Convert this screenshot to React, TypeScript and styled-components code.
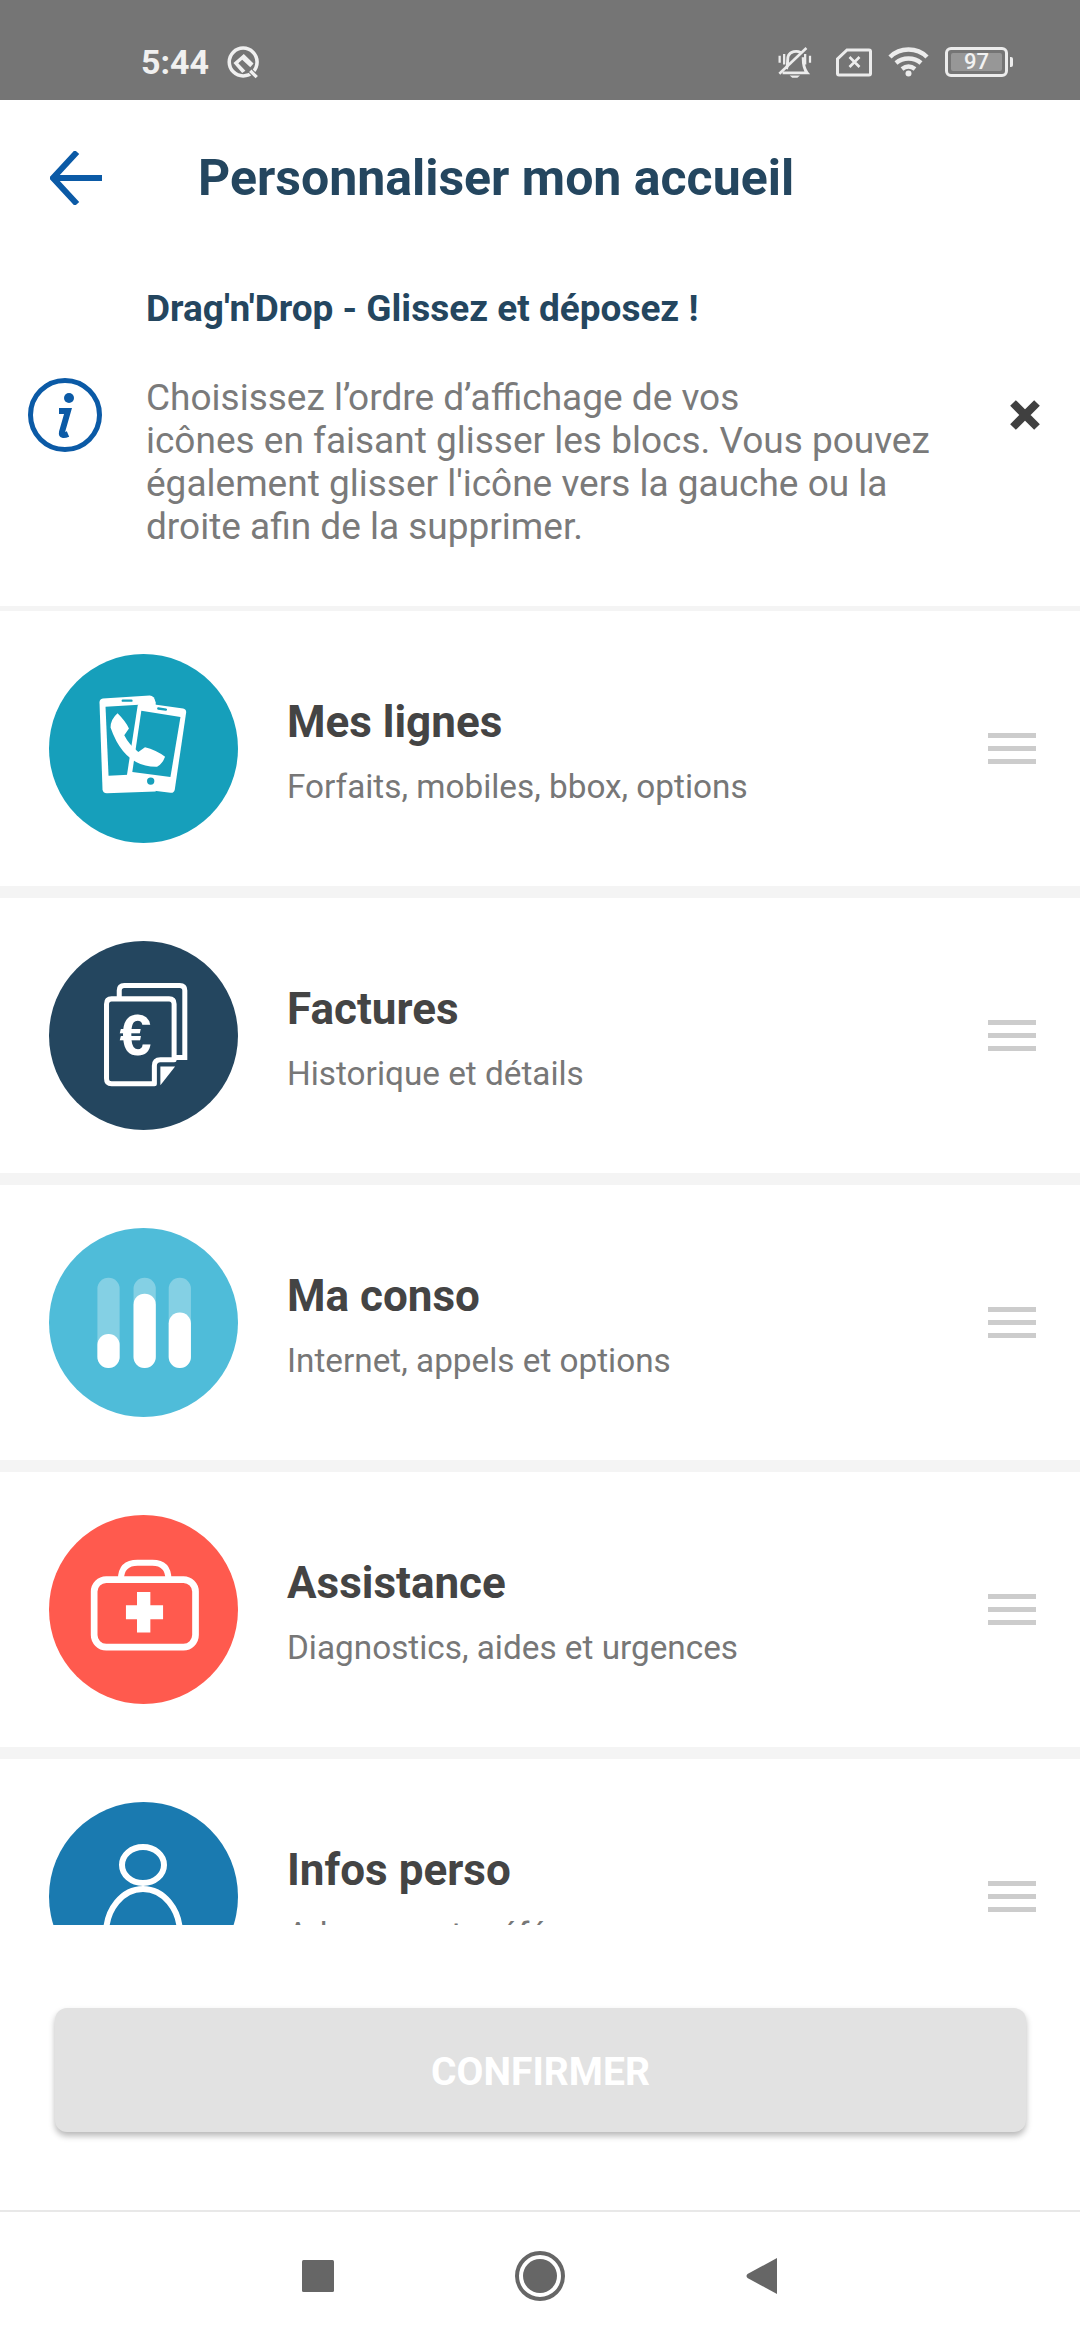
import React from "react";
import styled, { createGlobalStyle } from "styled-components";

const GlobalStyle = createGlobalStyle`
  html, body {
    margin: 0;
    padding: 0;
    background: #ffffff;
  }
  * {
    box-sizing: border-box;
  }
`;

const BLUE = "#0b5aa6";
const NAVY = "#24465f";

function QLogo() {
  return (
    <svg width="34" height="36" viewBox="345 70 105 110">
      <circle cx="398" cy="125" r="43" fill="none" stroke="#f0f0f0" strokeWidth="11" />
      <path d="M418 150l24 24" stroke="#757575" strokeWidth="16" />
      <path d="M420 152l20 20" stroke="#f0f0f0" strokeWidth="10" />
      <path d="M400 100L430 130L420 141L395 118L383 129L405 152L395 159L368 128Z" fill="#f0f0f0" />
    </svg>
  );
}

function BellOffIcon() {
  return (
    <svg width="35" height="31" viewBox="105 78 108 96" fill="none" stroke="#ececec">
      <path d="M134 146C141 130 135 115 140 105C146 92 165 88 178 95M186 110C186 125 185 142 198 158H122" strokeWidth="9" />
      <path d="M112 161L196 81" strokeWidth="8" />
      <path d="M113 105v22M127 100v32M192 100v32M207 105v22" strokeWidth="7" />
      <path d="M144 166h32l-8 7h-16z" fill="#ececec" stroke="none" />
    </svg>
  );
}

function SimIcon() {
  return (
    <svg width="36" height="29" viewBox="0 0 36 29" fill="none" stroke="#ececec">
      <path d="M11 2h22a1.5 1.5 0 0 1 1.5 1.5v22a1.5 1.5 0 0 1-1.5 1.5H3a1.5 1.5 0 0 1-1.5-1.5V11z" strokeWidth="3" />
      <path d="M13.5 9l10 10M23.5 9l-10 10" strokeWidth="2.6" />
    </svg>
  );
}

function WifiIcon() {
  return (
    <svg width="41" height="30" viewBox="0 0 41 30" fill="none" stroke="#ececec" strokeWidth="4.5">
      <path d="M2 10C12 0 29 0 39 10" />
      <path d="M8 16c7-6 18-6 25 0" />
      <path d="M14 22c4-3 9-3 13 0" />
      <circle cx="20.5" cy="26.5" r="3" fill="#ececec" stroke="none" />
    </svg>
  );
}

const BatteryWrap = styled.div`
  display: flex;
  align-items: center;
  gap: 2px;
`;

const BatteryBody = styled.div`
  width: 63px;
  height: 30px;
  border: 3px solid #ececec;
  border-radius: 6px;
  padding: 3px;
  display: flex;
`;

const BatteryFill = styled.div`
  flex: 1;
  background: #979797;
  border-radius: 2px;
  color: #f2f2f2;
  font: 500 22px/18px Roboto, sans-serif;
  text-align: center;
`;

const BatteryTip = styled.div`
  width: 3px;
  height: 10px;
  background: #ececec;
  border-radius: 0 2px 2px 0;
`;

function PhonesIcon() {
  return (
    <svg width="189" height="189" viewBox="57 45 565 565">
      <path d="M218 178L358 169Q372 169 376 190L376 456L230 461Q218 461 217 450L208 190Q208 179 218 178Z" fill="#fff" />
      <path d="M226 203L326 197L294 406L235 409Z" fill="#169fbb" />
      <path d="M335 191L458 208Q468 210 467 220L433 450Q431 461 420 460L300 445L288 420L322 200Q325 190 335 191Z" fill="#fff" />
      <path d="M333 215L450 233L420 413L306 398Z" fill="#169fbb" />
      <path d="M262 222Q288 248 296 268L282 288Q296 316 324 338L344 324Q376 332 404 352Q396 374 380 382Q282 384 241 265Q241 240 262 222Z" fill="#fff" />
      <rect x="274" y="181" width="33" height="7" rx="3.5" fill="#169fbb" />
      <rect x="380" y="206" width="30" height="7" rx="3.5" fill="#169fbb" transform="rotate(8 395 210)" />
      <circle cx="361" cy="425" r="11" fill="#169fbb" />
    </svg>
  );
}

function BillsIcon() {
  return (
    <svg width="189" height="189" viewBox="57 37 565 565">
      <path d="M267 205V185Q267 170 282 170H448Q463 170 463 185V385H432" fill="none" stroke="#fff" strokeWidth="15" />
      <path d="M372 464H244Q229 464 229 449V225Q229 210 244 210H416Q431 210 431 225V392H390Q372 392 372 410Z" fill="#24465f" stroke="#fff" strokeWidth="15" strokeLinejoin="round" />
      <path d="M390 412H434L390 468Z" fill="#fff" />
      <text x="268" y="378" fill="#fff" fontFamily="'Liberation Sans', sans-serif" fontWeight="700" fontSize="172">€</text>
    </svg>
  );
}

function ConsoIcon() {
  const bars = [
    { x: 203, top: 360 },
    { x: 312, top: 238 },
    { x: 418, top: 295 },
  ];
  return (
    <svg width="189" height="189" viewBox="57 40 570 570">
      {bars.map((bar) => (
        <g key={bar.x}>
          <rect x={bar.x} y="190" width="67" height="272" rx="33" fill="#fff" opacity="0.3" />
          <rect x={bar.x} y={bar.top} width="67" height={462 - bar.top} rx="33" fill="#fff" />
        </g>
      ))}
    </svg>
  );
}

function CaseIcon() {
  return (
    <svg width="189" height="189" viewBox="57 45 565 565">
      <rect x="192" y="238" width="303" height="202" rx="36" fill="none" stroke="#fff" strokeWidth="20" />
      <path d="M272 238Q272 188 322 188H366Q414 188 414 238" fill="none" stroke="#fff" strokeWidth="18" />
      <path d="M320 275H360V315H398V357H360V396H320V357H287V315H320Z" fill="#fff" />
    </svg>
  );
}

function PersonIcon() {
  return (
    <svg width="189" height="189" viewBox="0 0 189 189">
      <ellipse cx="94" cy="63" rx="21" ry="18" fill="none" stroke="#fff" strokeWidth="6" />
      <ellipse cx="94" cy="132" rx="37" ry="45" fill="none" stroke="#fff" strokeWidth="6" />
    </svg>
  );
}

const items = [
  { title: "Mes lignes", sub: "Forfaits, mobiles, bbox, options", color: "#169fbb", icon: <PhonesIcon /> },
  { title: "Factures", sub: "Historique et détails", color: "#24465f", icon: <BillsIcon /> },
  { title: "Ma conso", sub: "Internet, appels et options", color: "#4fbcd9", icon: <ConsoIcon /> },
  { title: "Assistance", sub: "Diagnostics, aides et urgences", color: "#ff5a4e", icon: <CaseIcon /> },
  { title: "Infos perso", sub: "Adresses et préférences", color: "#1a7ab0", icon: <PersonIcon /> },
];

function App() {
  return (
    <StyledPage>
      <GlobalStyle />
      <StyledStatusBar>
        <StyledStatusLeft>
          <StyledTime>5:44</StyledTime>
          <QLogo />
        </StyledStatusLeft>
        <StyledStatusRight>
          <BellOffIcon />
          <SimIcon />
          <WifiIcon />
          <BatteryWrap>
            <BatteryBody>
              <BatteryFill>97</BatteryFill>
            </BatteryBody>
            <BatteryTip />
          </BatteryWrap>
        </StyledStatusRight>
      </StyledStatusBar>

      <StyledHeader>
        <svg width="52" height="54" viewBox="0 0 52 54" fill="none" stroke={BLUE} strokeWidth="6">
          <path d="M27 1L3 27l24 26" />
          <path d="M3 27h49" />
        </svg>
        <StyledTitle>Personnaliser mon accueil</StyledTitle>
      </StyledHeader>

      <StyledBanner>
        <StyledBannerTitle>Drag'n'Drop - Glissez et déposez !</StyledBannerTitle>
        <StyledBannerBody>
          <StyledInfoIcon>
            <svg width="74" height="74" viewBox="0 0 74 74" fill="none">
              <circle cx="37" cy="37" r="34.5" stroke={BLUE} strokeWidth="5" />
              <circle cx="41" cy="20" r="5" fill={BLUE} />
              <path d="M31 33h9l-6 21q-1 5 6 2" stroke={BLUE} strokeWidth="6" />
            </svg>
          </StyledInfoIcon>
          <StyledBannerText>
            Choisissez l’ordre d’affichage de vos
            <br />
            icônes en faisant glisser les blocs. Vous pouvez
            <br />
            également glisser l'icône vers la gauche ou la
            <br />
            droite afin de la supprimer.
          </StyledBannerText>
          <StyledClose>
            <svg width="30" height="30" viewBox="0 0 30 30" stroke="#404040" strokeWidth="8">
              <path d="M3 3l24 24M27 3L3 27" />
            </svg>
          </StyledClose>
        </StyledBannerBody>
      </StyledBanner>

      <StyledList>
        {items.map((item) => (
          <StyledRow key={item.title}>
            <StyledCircle $color={item.color}>{item.icon}</StyledCircle>
            <StyledRowText>
              <StyledRowTitle>{item.title}</StyledRowTitle>
              <StyledRowSub>{item.sub}</StyledRowSub>
            </StyledRowText>
            <StyledHandle>
              <span />
              <span />
              <span />
            </StyledHandle>
          </StyledRow>
        ))}
      </StyledList>

      <StyledFooter>
        <StyledConfirm>CONFIRMER</StyledConfirm>
      </StyledFooter>

      <StyledNavBar>
        <svg width="32" height="32" viewBox="0 0 32 32">
          <rect width="32" height="32" rx="1.5" fill="#666" />
        </svg>
        <svg width="50" height="50" viewBox="0 0 50 50">
          <circle cx="25" cy="25" r="23" fill="none" stroke="#666" strokeWidth="4" />
          <circle cx="25" cy="25" r="17" fill="#666" />
        </svg>
        <svg width="32" height="38" viewBox="0 0 32 38">
          <path d="M31 1v36L1.5 21q-2-2 0-4z" fill="#666" />
        </svg>
      </StyledNavBar>
    </StyledPage>
  );
}

export default App;

const StyledPage = styled.div`
  display: flex;
  flex-direction: column;
  width: 1080px;
  height: 2340px;
  overflow: hidden;
  background: #ffffff;
  font-family: Roboto, "Liberation Sans", sans-serif;
`;

const StyledStatusBar = styled.div`
  display: flex;
  justify-content: space-between;
  align-items: center;
  height: 100px;
  padding: 24px 67px 0 141px;
  background: #757575;
  flex-shrink: 0;
`;

const StyledStatusLeft = styled.div`
  display: flex;
  align-items: center;
  gap: 17px;
`;

const StyledTime = styled.span`
  font-size: 34px;
  font-weight: 700;
  color: #f0f0f0;
`;

const StyledStatusRight = styled.div`
  display: flex;
  align-items: center;
  gap: 16px;
  svg:first-child {
    margin-right: 8px;
  }
`;

const StyledHeader = styled.div`
  display: flex;
  align-items: center;
  gap: 96px;
  height: 156px;
  padding-left: 50px;
  flex-shrink: 0;
`;

const StyledTitle = styled.h1`
  margin: 0;
  font-size: 50px;
  font-weight: 700;
  color: ${NAVY};
`;

const StyledBanner = styled.div`
  height: 350px;
  padding-top: 30px;
  flex-shrink: 0;
`;

const StyledBannerTitle = styled.div`
  padding-left: 146px;
  font-size: 37px;
  font-weight: 700;
  line-height: 46px;
  color: ${NAVY};
`;

const StyledBannerBody = styled.div`
  display: flex;
  align-items: flex-start;
  margin-top: 44px;
  padding-left: 28px;
  gap: 44px;
`;

const StyledInfoIcon = styled.div`
  display: flex;
  margin-top: 2px;
`;

const StyledBannerText = styled.p`
  margin: 0;
  flex: 1;
  font-size: 37px;
  line-height: 43px;
  color: #7a7a7a;
`;

const StyledClose = styled.div`
  display: flex;
  margin-top: 24px;
  margin-right: 40px;
`;

const StyledList = styled.div`
  display: flex;
  flex-direction: column;
  height: 1319px;
  overflow: hidden;
  background: #f4f4f4;
  padding-top: 5px;
  gap: 12px;
  flex-shrink: 0;
`;

const StyledRow = styled.div`
  display: flex;
  align-items: center;
  flex-shrink: 0;
  height: 275px;
  padding: 0 44px 0 49px;
  background: #ffffff;
`;

const StyledCircle = styled.div<{ $color: string }>`
  width: 189px;
  height: 189px;
  border-radius: 50%;
  overflow: hidden;
  flex-shrink: 0;
  background: ${({ $color }) => $color};
  svg {
    display: block;
  }
`;

const StyledRowText = styled.div`
  flex: 1;
  padding: 6px 0 0 49px;
`;

const StyledRowTitle = styled.div`
  font-size: 44px;
  font-weight: 700;
  line-height: 50px;
  color: #444444;
`;

const StyledRowSub = styled.div`
  margin-top: 20px;
  font-size: 33.3px;
  line-height: 40px;
  color: #777777;
`;

const StyledHandle = styled.div`
  display: flex;
  flex-direction: column;
  gap: 8px;
  width: 48px;
  span {
    height: 5px;
    background: #cccccc;
  }
`;

const StyledFooter = styled.div`
  display: flex;
  flex: 1;
  align-items: flex-start;
  padding: 83px 54px 0 55px;
  background: #ffffff;
  border-bottom: 2px solid #e8e8e8;
`;

const StyledConfirm = styled.button`
  width: 100%;
  height: 124px;
  border: none;
  border-radius: 12px;
  background: #e2e2e2;
  box-shadow: 0 4px 6px rgba(0, 0, 0, 0.28);
  color: #ffffff;
  font-family: Roboto, sans-serif;
  font-size: 39px;
  font-weight: 700;
  padding-top: 5px;
`;

const StyledNavBar = styled.div`
  display: flex;
  align-items: center;
  justify-content: center;
  gap: 181px;
  height: 128px;
  flex-shrink: 0;
`;
